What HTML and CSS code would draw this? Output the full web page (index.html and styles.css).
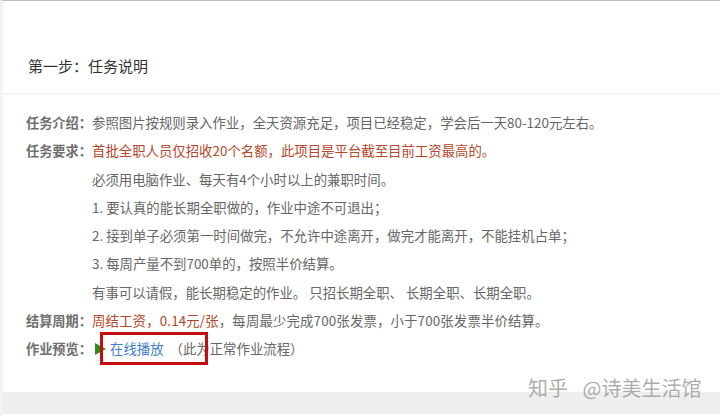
FILE: index.html
```html
<!DOCTYPE html>
<html lang="zh-CN">
<head>
    <meta charset="UTF-8">
    <title>任务说明</title>
    <link rel="stylesheet" href="styles.css">
</head>
<body>

    <div class="page">
        <h2 class="step-title">第一步&#xFF1A;任务说明</h2>

        <div class="task-info">
            <div class="info-row">
                <span class="info-label">任务介绍&#xFF1A;</span>
                <span class="info-value">参照图片按规则录入作业&#xFF0C;全天资源充足&#xFF0C;项目已经稳定&#xFF0C;学会后一天80-120元左右。</span>
            </div>
            <div class="info-row">
                <span class="info-label">任务要求&#xFF1A;</span>
                <span class="info-value highlight">首批全职人员仅招收20个名额&#xFF0C;此项目是平台截至目前工资最高的。</span>
            </div>
            <div class="info-row">
                <span class="info-label"></span>
                <span class="info-value">必须用电脑作业、每天有4个小时以上的兼职时间。</span>
            </div>
            <div class="info-row">
                <span class="info-label"></span>
                <span class="info-value">1. 要认真的能长期全职做的&#xFF0C;作业中途不可退出&#xFF1B;</span>
            </div>
            <div class="info-row">
                <span class="info-label"></span>
                <span class="info-value">2. 接到单子必须第一时间做完&#xFF0C;不允许中途离开&#xFF0C;做完才能离开&#xFF0C;不能挂机占单&#xFF1B;</span>
            </div>
            <div class="info-row">
                <span class="info-label"></span>
                <span class="info-value">3. 每周产量不到700单的&#xFF0C;按照半价结算。</span>
            </div>
            <div class="info-row">
                <span class="info-label"></span>
                <span class="info-value">有事可以请假&#xFF0C;能长期稳定的作业。 只招长期全职、 长期全职、长期全职。</span>
            </div>
            <div class="info-row">
                <span class="info-label">结算周期&#xFF1A;</span>
                <span class="info-value settle"><span class="highlight">周结工资&#xFF0C;0.14元/张</span>&#xFF0C;每周最少完成700张发票&#xFF0C;小于700张发票半价结算。</span>
            </div>
            <div class="info-row">
                <span class="info-label">作业预览&#xFF1A;</span>
                <span class="info-value preview">
                    <svg class="play-icon" width="11" height="12" viewBox="0 0 11 12"><path d="M0 0 L11 6 L0 12 Z" fill="#2e8b1e"/></svg>
                    <a class="play-link" href="#">在线播放</a>
                    <span class="play-note">&#xFF08;此为正常作业流程&#xFF09;</span>
                </span>
            </div>
        </div>

        <div class="footer-band"></div>

        <div class="red-box"></div>
        <div class="watermark">知乎 @诗美生活馆</div>
    </div>

</body>
</html>
```

FILE: styles.css
```css
* {
    box-sizing: border-box;
}

html, body {
    margin: 0;
    padding: 0;
}

body {
    width: 720px;
    height: 416px;
    overflow: hidden;
    background-color: #fff;
    font-family: "Noto Sans CJK SC", "Liberation Sans", sans-serif;
    color: #666;
}

.page {
    position: relative;
    height: 416px;
    border-top: 1px solid #bdbdbd;
    border-left: 3px solid #f3f3f3;
}

.step-title {
    margin: 0;
    height: 94px;
    padding: 54px 0 0 25px;
    font-size: 15px;
    line-height: 22px;
    font-weight: normal;
    color: #333;
    border-bottom: 2px solid #f3f5f7;
}

.task-info {
    height: 297px;
    padding: 13px 0 0 23px;
    font-size: 13.4px;
}

.info-row {
    display: flex;
    height: 28.25px;
    line-height: 28.25px;
}

.info-label {
    width: 66px;
    flex: none;
    white-space: nowrap;
    font-weight: 700;
    font-size: 13.2px;
    padding-top: 1px;
    color: #6e6e6e;
}

.highlight {
    color: #b5472a;
}

.settle {
    letter-spacing: 0.15px;
}

.preview {
    display: flex;
    align-items: center;
}

.play-icon {
    margin: 1px 4px 0 3px;
}

.play-link {
    color: #3f7fc9;
    text-decoration: none;
}

.play-note {
    margin-left: 6px;
}

.footer-band {
    height: 22px;
    background-color: #eeeeee;
}

.red-box {
    position: absolute;
    left: 97px;
    top: 331px;
    width: 108px;
    height: 33px;
    border: 3px solid #c40d12;
}

.watermark {
    position: absolute;
    left: 525px;
    top: 374px;
    font-size: 20px;
    line-height: 26px;
    word-spacing: 10px;
    color: rgba(150, 150, 150, 0.8);
    white-space: nowrap;
}
```
